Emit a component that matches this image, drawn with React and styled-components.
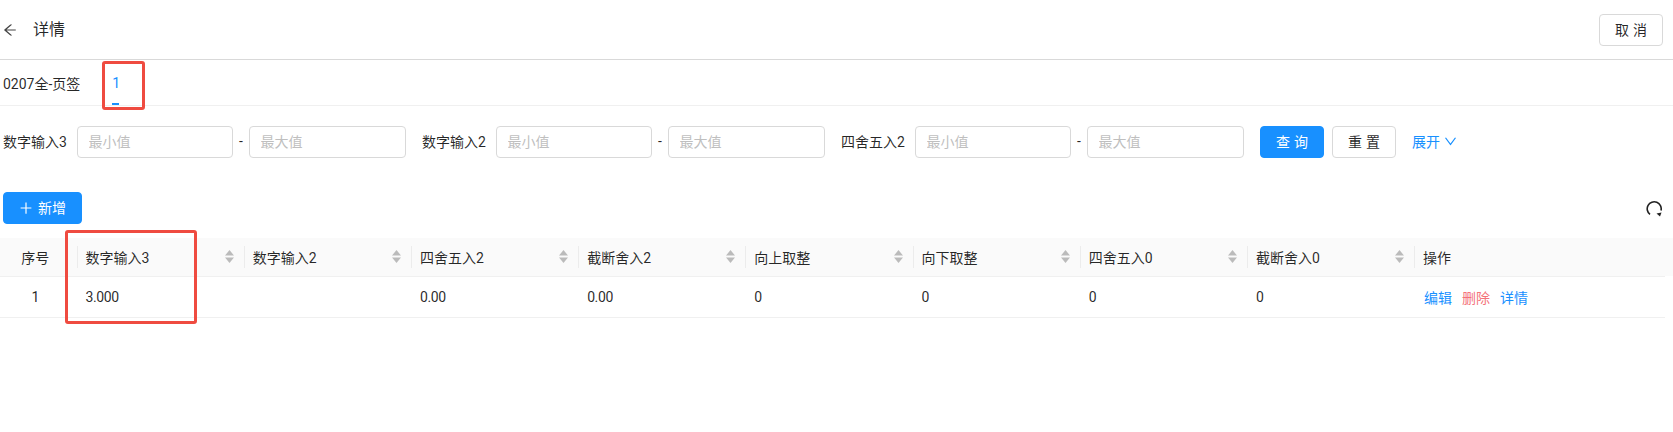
import styled, { createGlobalStyle } from 'styled-components';

const GlobalStyle = createGlobalStyle`
  html, body { margin: 0; padding: 0; background: #fff; }
  body {
    font-family: Roboto, "Noto Sans CJK SC", sans-serif;
    font-size: 14px;
    color: rgba(0, 0, 0, 0.85);
  }
`;

const Page = styled.div`
  position: relative;
  width: 1673px;
  height: 432px;
  overflow: hidden;
`;

const Header = styled.header`
  display: flex;
  align-items: center;
  height: 59px;
  padding: 0 10px 0 3px;
  border-bottom: 1px solid #d9d9d9;
  box-sizing: content-box;
`;

const BackIcon = styled.svg`
  width: 14px;
  height: 14px;
  margin-right: 16px;
  fill: #444;
`;

const Title = styled.h1`
  flex: 1;
  margin: 0;
  padding-top: 1px;
  font-size: 16px;
  font-weight: 400;
  line-height: 24px;
`;

const Button = styled.button`
  display: inline-flex;
  align-items: center;
  justify-content: center;
  box-sizing: border-box;
  width: ${(props) => props.width || 64}px;
  height: 32px;
  padding: 0 0 0 ${(props) => (props.spaced ? 4 : 0)}px;
  border: 1px solid ${(props) => (props.primary ? '#1890ff' : '#d9d9d9')};
  border-radius: 4px;
  background: ${(props) => (props.primary ? '#1890ff' : '#fff')};
  color: ${(props) => (props.primary ? '#fff' : 'rgba(0, 0, 0, 0.85)')};
  font-family: inherit;
  font-size: 14px;
  line-height: 22px;
  letter-spacing: ${(props) => (props.spaced ? '4px' : '0')};
`;

const Tabs = styled.nav`
  display: flex;
  height: 45px;
  padding-left: 3px;
  border-bottom: 1px solid #f0f0f0;
`;

const Tab = styled.div`
  position: relative;
  display: flex;
  align-items: center;
  height: 45px;
  margin-right: ${(props) => (props.active ? 0 : 32)}px;
  color: ${(props) => (props.active ? '#1890ff' : 'rgba(0, 0, 0, 0.85)')};
  &::after {
    display: ${(props) => (props.active ? 'block' : 'none')};
    position: absolute;
    left: 0;
    bottom: 0;
    width: 7px;
    height: 2px;
    background: #1890ff;
    content: '';
  }
`;

const SearchBar = styled.form`
  display: flex;
  align-items: center;
  height: 32px;
  margin: 0;
  padding: 20px 0 0 3px;
`;

const Range = styled.div`
  display: flex;
  align-items: center;
  margin-right: 16px;
`;

const RangeLabel = styled.label`
  width: 74px;
  padding-bottom: 2px;
  white-space: nowrap;
`;

const Input = styled.input`
  box-sizing: border-box;
  width: 156px;
  height: 32px;
  padding: 0 10.5px;
  border: 1px solid #d9d9d9;
  border-radius: 4px;
  font-family: inherit;
  font-size: 14px;
  &:last-child { width: 157px; }
  &::placeholder { color: #bfbfbf; }
`;

const Dash = styled.span`
  width: 16px;
  padding-bottom: 2px;
  text-align: center;
`;

const Actions = styled.div`
  display: flex;
  align-items: center;
  gap: 8px;
`;

const Expand = styled.a`
  display: inline-flex;
  align-items: center;
  gap: 4px;
  margin-left: 8px;
  padding-bottom: 2px;
  color: #1890ff;
`;

const ExpandIcon = styled.svg`
  width: 13px;
  height: 13px;
  fill: #1890ff;
`;

const Toolbar = styled.div`
  display: flex;
  align-items: center;
  justify-content: space-between;
  height: 32px;
  margin-top: 34px;
  padding: 0 11px 0 3px;
`;

const AddIcon = styled.svg`
  width: 14px;
  height: 14px;
  margin-right: 5px;
  fill: #fff;
`;

const ReloadIcon = styled.svg`
  width: 17px;
  height: 17px;
  fill: none;
  stroke: #222;
  stroke-width: 1.6;
`;

const TableWrap = styled.div`
  margin-top: 14px;
  background: linear-gradient(#fafafa, #fafafa) top / 100% 38px no-repeat;
`;

const Table = styled.table`
  width: 1665px;
  table-layout: fixed;
  border-collapse: collapse;
`;

const Th = styled.th`
  position: relative;
  height: 38px;
  padding: 0 8px;
  border-bottom: 1px solid #f0f0f0;
  box-sizing: border-box;
  font-weight: 400;
  text-align: ${(props) => (props.center ? 'center' : 'left')};
  padding-right: ${(props) => (props.center ? 15 : 8)}px;
  &:not(:first-child)::before {
    position: absolute;
    left: -1px;
    top: 8px;
    width: 1px;
    height: 22px;
    background: #ececec;
    content: '';
  }
`;

const HeadCell = styled.div`
  display: flex;
  align-items: center;
  justify-content: space-between;
`;

const Sorter = styled.svg`
  width: 9px;
  height: 13px;
  margin-right: 3px;
  fill: #bbb;
`;

const Td = styled.td`
  height: 41px;
  padding: 0 8px;
  border-bottom: 1px solid #f0f0f0;
  box-sizing: border-box;
  letter-spacing: -0.4px;
  text-align: ${(props) => (props.center ? 'center' : 'left')};
  padding-right: ${(props) => (props.center ? 15 : 8)}px;
`;

const Operations = styled.div`
  display: flex;
  gap: 10px;
  margin-left: 1px;
  letter-spacing: 0;
`;

const Operation = styled.a`
  color: ${(props) => (props.danger ? '#f4727a' : '#1890ff')};
`;

const Callout = styled.div`
  position: absolute;
  left: ${(props) => props.x}px;
  top: ${(props) => props.y}px;
  width: ${(props) => props.w}px;
  height: ${(props) => props.h}px;
  box-sizing: border-box;
  border: 3px solid #ef4b40;
  border-radius: 3px;
  pointer-events: none;
`;

const ranges = ['数字输入3', '数字输入2', '四舍五入2'];
const columns = ['数字输入3', '数字输入2', '四舍五入2', '截断舍入2', '向上取整', '向下取整', '四舍五入0', '截断舍入0'];
const row = ['3.000', '', '0.00', '0.00', '0', '0', '0', '0'];

export default function App() {
  return (
    <Page>
      <GlobalStyle />
      <Header>
        <BackIcon viewBox="64 64 896 896">
          <path d="M872 474H286.9l350.2-304c5.6-4.9 2.2-14-5.2-14h-88.5c-3.9 0-7.6 1.4-10.5 3.9L155 487.8a31.96 31.96 0 0 0 0 48.3L535.1 866c1.5 1.3 3.3 2 5.2 2h91.5c7.4 0 10.8-9.2 5.2-14L286.9 550H872c4.4 0 8-3.6 8-8v-60c0-4.4-3.6-8-8-8z" />
        </BackIcon>
        <Title>详情</Title>
        <Button type="button" spaced>取消</Button>
      </Header>
      <Tabs>
        <Tab>0207全-页签</Tab>
        <Tab active>1</Tab>
      </Tabs>
      <SearchBar>
        {ranges.map((label) => (
          <Range key={label}>
            <RangeLabel>{label}</RangeLabel>
            <Input placeholder="最小值" />
            <Dash>-</Dash>
            <Input placeholder="最大值" />
          </Range>
        ))}
        <Actions>
          <Button type="button" primary spaced>查询</Button>
          <Button type="button" spaced>重置</Button>
          <Expand>
            展开
            <ExpandIcon viewBox="64 64 896 896">
              <path d="M884 256h-75c-5.1 0-9.9 2.5-12.9 6.6L512 654.2 227.9 262.6c-3-4.1-7.8-6.6-12.9-6.6h-75c-6.5 0-10.3 7.4-6.5 12.7l352.6 486.1c12.8 17.6 39 17.6 51.7 0l352.6-486.1c3.9-5.3.1-12.7-6.4-12.7z" />
            </ExpandIcon>
          </Expand>
        </Actions>
      </SearchBar>
      <Toolbar>
        <Button type="button" primary width={79}>
          <AddIcon viewBox="64 64 896 896">
            <path d="M482 152h60q8 0 8 8v704q0 8-8 8h-60q-8 0-8-8V160q0-8 8-8z" />
            <path d="M176 474h672q8 0 8 8v60q0 8-8 8H176q-8 0-8-8v-60q0-8 8-8z" />
          </AddIcon>
          新增
        </Button>
        <ReloadIcon viewBox="0 0 17 17">
          <path d="M5 14.4A7 7 0 1 1 16 10.5" />
          <path d="M11.5 13.5l5-1-1.5 4z" fill="#222" stroke="none" />
        </ReloadIcon>
      </Toolbar>
      <TableWrap>
        <Table>
          <colgroup>
            <col style={{ width: 77.6 }} />
            {columns.map((title, i) => (
              <col key={i} style={{ width: 167.2 }} />
            ))}
            <col />
          </colgroup>
          <thead>
            <tr>
              <Th center>序号</Th>
              {columns.map((title, i) => (
                <Th key={i}>
                  <HeadCell>
                    {title}
                    <Sorter viewBox="0 0 9 13">
                      <path d="M4.5 0l4.5 5.5H0z" />
                      <path d="M4.5 13L0 7.5h9z" />
                    </Sorter>
                  </HeadCell>
                </Th>
              ))}
              <Th>操作</Th>
            </tr>
          </thead>
          <tbody>
            <tr>
              <Td center>1</Td>
              {row.map((value, i) => (
                <Td key={i}>{value}</Td>
              ))}
              <Td>
                <Operations>
                  <Operation>编辑</Operation>
                  <Operation danger>删除</Operation>
                  <Operation>详情</Operation>
                </Operations>
              </Td>
            </tr>
          </tbody>
        </Table>
      </TableWrap>
      <Callout x={102} y={61} w={43} h={49} />
      <Callout x={65} y={230} w={132} h={94} />
    </Page>
  );
}
